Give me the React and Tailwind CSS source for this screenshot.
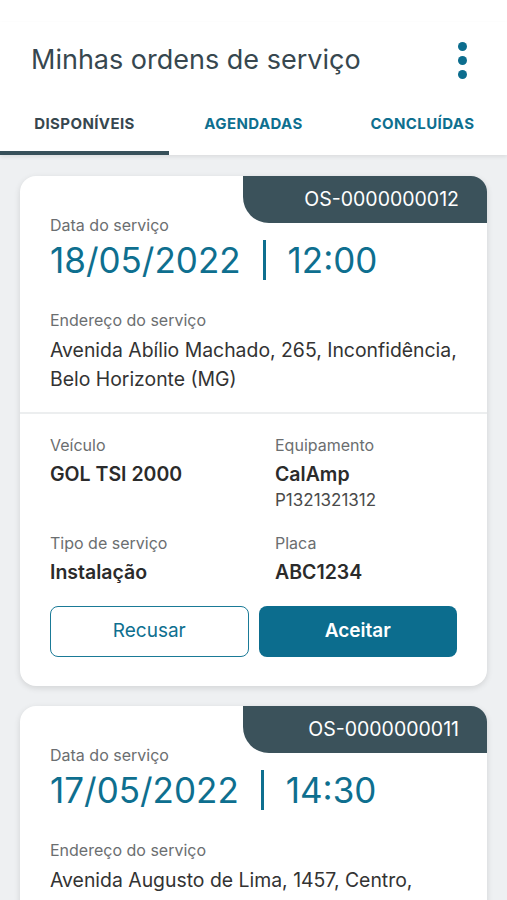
const orders = [
  {
    id: 'OS-0000000012',
    date: '18/05/2022',
    time: '12:00',
    address: 'Avenida Abílio Machado, 265, Inconfidência, Belo Horizonte (MG)',
    vehicle: 'GOL TSI 2000',
    equipment: 'CalAmp',
    serial: 'P1321321312',
    type: 'Instalação',
    plate: 'ABC1234',
  },
  {
    id: 'OS-0000000011',
    date: '17/05/2022',
    time: '14:30',
    address: 'Avenida Augusto de Lima, 1457, Centro, Belo Horizonte (MG)',
    vehicle: 'POLO 1.6 2019',
    equipment: 'CalAmp',
    serial: 'P1321321313',
    type: 'Instalação',
    plate: 'DEF5678',
  },
];

function Field({ label, value, extra }) {
  return (
    <div>
      <div className="text-[16px] leading-[20px] text-[#6b6e70]">{label}</div>
      <div className="mt-[7px] text-[19.5px] leading-[24px] font-semibold text-[#2b2b2b]">{value}</div>
      {extra && <div className="mt-[4px] text-[17px] leading-[20px] text-[#4a4a4a]">{extra}</div>}
    </div>
  );
}

function OrderCard({ order }) {
  return (
    <div className="relative bg-white rounded-[16px] shadow-[0_2px_6px_rgba(0,0,0,0.12)] overflow-hidden">
      {/* OS badge */}
      <div className="absolute top-0 right-0 w-[244px] h-[47px] bg-[#3b525b] rounded-bl-[26px] flex items-center justify-end pr-[28px]">
        <span className="text-white text-[19.5px]">{order.id}</span>
      </div>

      <div className="px-[30px] pt-[39px]">
        <div className="text-[16px] leading-[20px] text-[#6b6e70]">Data do serviço</div>
        <div className="mt-[5px] flex items-center h-[40px] text-[35px] leading-[40px] text-[#0e6f8f]">
          <span>{order.date}</span>
          <span className="mx-[22px] w-[3px] h-[40px] bg-[#0e6f8f]" />
          <span>{order.time}</span>
        </div>

        <div className="mt-[30px] text-[16px] leading-[20px] text-[#6b6e70]">Endereço do serviço</div>
        <div className="mt-[6px] text-[19.4px] leading-[29px] text-[#333]">{order.address}</div>
      </div>

      <div className="mt-[18px] h-[2px] bg-[#eceeef]" />

      <div className="px-[30px] pt-[21px] pb-[29px]">
        <div className="grid grid-cols-[225px_1fr] gap-y-[23px]">
          <Field label="Veículo" value={order.vehicle} />
          <Field label="Equipamento" value={order.equipment} extra={order.serial} />
          <Field label="Tipo de serviço" value={order.type} />
          <Field label="Placa" value={order.plate} />
        </div>

        <div className="mt-[22px] grid grid-cols-2 gap-[10px]">
          <button className="h-[51px] rounded-[8px] border border-[#1a7a97] bg-white text-[#0e6f8f] text-[19px]">
            Recusar
          </button>
          <button className="h-[51px] rounded-[8px] bg-[#0c6d8e] text-white text-[19px] font-semibold">
            Aceitar
          </button>
        </div>
      </div>
    </div>
  );
}

export default function App() {
  const tabs = ['DISPONÍVEIS', 'AGENDADAS', 'CONCLUÍDAS'];

  return (
    <div className="min-h-screen bg-[#eef0f2] font-['Inter',sans-serif]">
      {/* Header */}
      <div className="relative z-10 bg-white shadow-[0_2px_4px_rgba(0,0,0,0.08)]">
        <div className="mt-[22px] h-[76px] flex items-center justify-between pl-[31px] pr-[40px]">
          <h1 className="text-[27px] text-[#37474f]">Minhas ordens de serviço</h1>
          <div className="flex flex-col gap-[5px]">
            <span className="w-[9px] h-[9px] rounded-full bg-[#0c6d8e]" />
            <span className="w-[9px] h-[9px] rounded-full bg-[#0c6d8e]" />
            <span className="w-[9px] h-[9px] rounded-full bg-[#0c6d8e]" />
          </div>
        </div>
        <div className="grid grid-cols-3 h-[57px]">
          {tabs.map((t, i) => (
            <div key={t} className="relative flex items-center justify-center pb-[4px]">
              <span className={`text-[15px] tracking-[0.4px] font-bold ${i === 0 ? 'text-[#37474f]' : 'text-[#0e6f8f]'}`}>{t}</span>
              {i === 0 && <span className="absolute bottom-0 left-0 right-0 h-[4px] bg-[#37505a]" />}
            </div>
          ))}
        </div>
      </div>

      {/* Orders */}
      <div className="px-[20px] pt-[21px] pb-[20px] flex flex-col gap-[20px]">
        {orders.map((o) => (
          <OrderCard key={o.id} order={o} />
        ))}
      </div>
    </div>
  );
}
